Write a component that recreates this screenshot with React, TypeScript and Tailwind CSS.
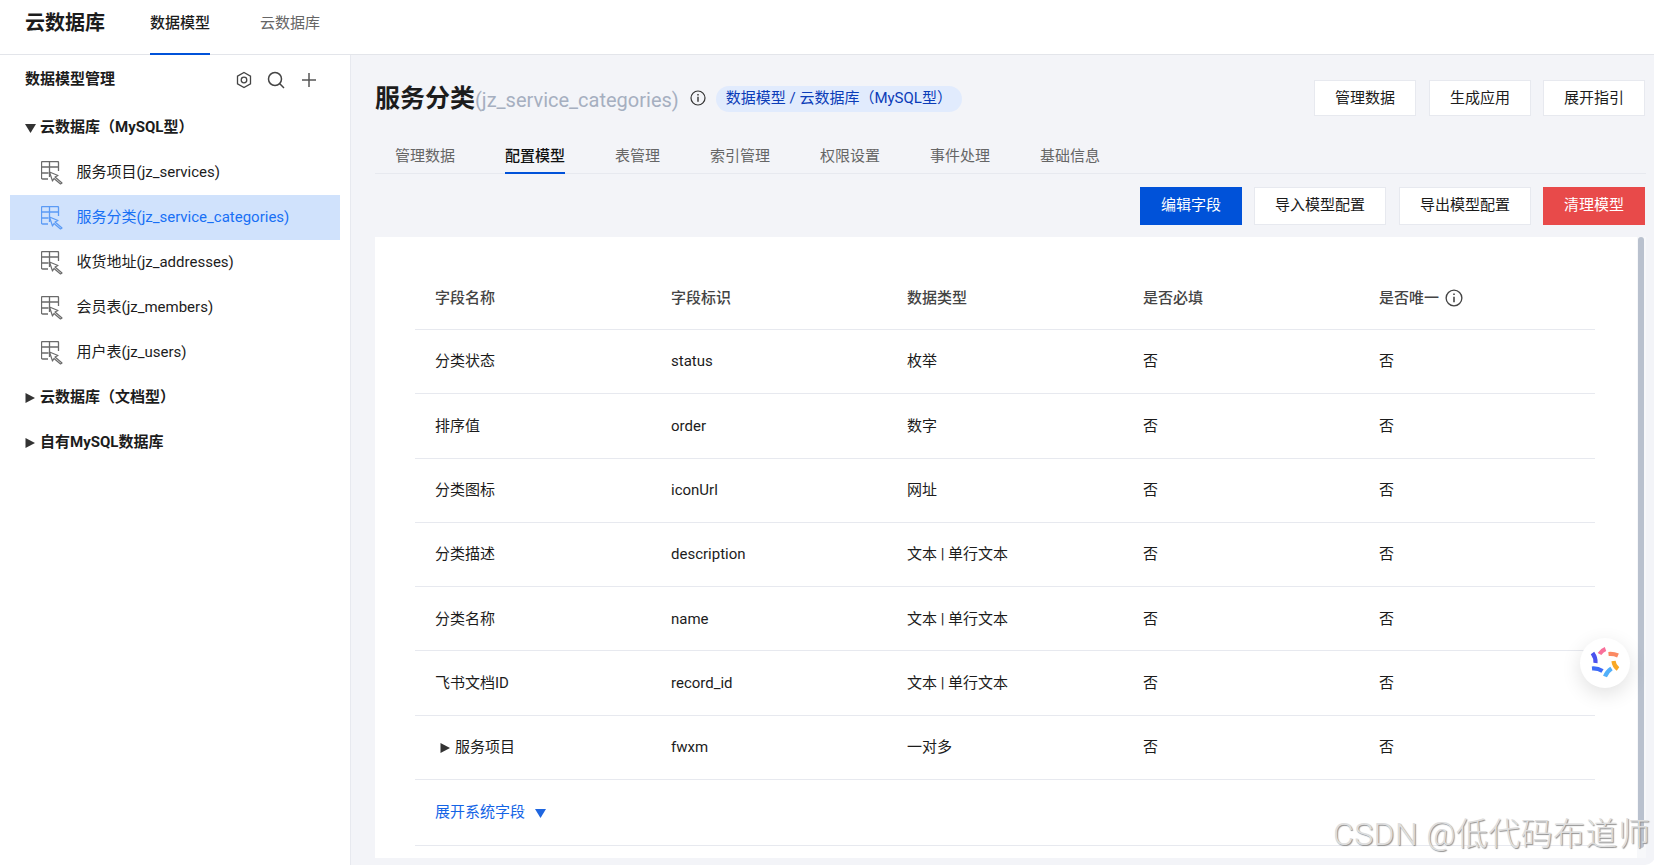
const font = "font-['Roboto','Noto_Sans_CJK_SC',sans-serif]";

const tableItems = [
  "服务项目(jz_services)",
  "服务分类(jz_service_categories)",
  "收货地址(jz_addresses)",
  "会员表(jz_members)",
  "用户表(jz_users)",
];

const tabs = ["管理数据", "配置模型", "表管理", "索引管理", "权限设置", "事件处理", "基础信息"];

const rows = [
  ["分类状态", "status", "枚举"],
  ["排序值", "order", "数字"],
  ["分类图标", "iconUrl", "网址"],
  ["分类描述", "description", "文本 | 单行文本"],
  ["分类名称", "name", "文本 | 单行文本"],
  ["飞书文档ID", "record_id", "文本 | 单行文本"],
  ["服务项目", "fwxm", "一对多"],
];

function TableIcon({ color }: { color: string }) {
  return (
    <svg width="24" height="24" viewBox="0 0 24 24" fill="none" stroke={color} className="shrink-0">
      <path d="M7 18H1.500a1 1 0 0 1-1-1V1.500a1 1 0 0 1 1-1h15a1 1 0 0 1 1 1V10" strokeWidth="1.300" />
      <path d="M.5 6h17M.5 12h7M8.500.5V16M8.500 6v5" strokeWidth="1.300" />
      <path d="M8.500 11l8.500 3.500-3 1.500 7 6-1.500 1-6.500-5.500-1.500 2.500z" strokeWidth="1.200" strokeLinejoin="round" />
    </svg>
  );
}

function InfoIcon({ size }: { size: number }) {
  return (
    <svg width={size} height={size} viewBox="0 0 16 16" fill="none" stroke="currentColor" strokeWidth="1.200">
      <circle cx="8" cy="8" r="7" />
      <path d="M8 6.800v5" strokeWidth="1.400" />
      <path d="M8 4v1.400" strokeWidth="1.400" />
    </svg>
  );
}

function Triangle({ down, className }: { down?: boolean; className: string }) {
  return (
    <svg width="11" height="10" viewBox="0 0 11 10" className={className} fill="currentColor">
      {down ? <path d="M0 1h11L5.500 10z" /> : <path d="M.5 0l9.500 5-9.500 5z" />}
    </svg>
  );
}

function Bot() {
  return (
    <svg width="30" height="30" viewBox="0 0 30 30" fill="none" strokeWidth="4.200" className="overflow-visible">
      <path d="M9.500 6Q11.500 2.500 15.500 1" stroke="#f8709b" />
      <path d="M18.500 6q5-.5 9.500 1.500" stroke="#fb8a63" />
      <path d="M23.500 13q.5 5 4.500 8" stroke="#f9a825" />
      <path d="M21.500 20.500q-4.500 3-6.500 8" stroke="#52b0fa" />
      <path d="M12.500 23q-5-3-10.500-2.500" stroke="#3d6bf7" />
      <path d="M5.500 15q.5-5-3-10" stroke="#4b52ee" />
    </svg>
  );
}

function ActionButton({ label, className }: { label: string; className: string }) {
  return (
    <button className={`${className} h-[38px] pb-[2px] bg-white border border-[#e7e9ef] text-[15px] text-[#1a1a1a]`}>
      {label}
    </button>
  );
}

export default function App() {
  return (
    <div className={`${font} relative w-[1654px] h-[865px] overflow-hidden bg-white text-[15px] text-[#1c1c1c]`}>
      {/* Header */}
      <div className="flex items-stretch h-[55px] bg-white border-b border-[#e3e5ea] pl-[25px]">
        <div className="text-[20px] font-bold leading-[46px] w-[125px]">云数据库</div>
        <div className="w-[60px] mr-[50px] border-b-2 border-[#0052d9] -mb-px leading-[46px] font-medium">数据模型</div>
        <div className="leading-[46px] text-[#666]">云数据库</div>
      </div>

      <div className="flex h-[810px]">
        {/* Sidebar */}
        <div className="w-[351px] shrink-0 bg-white border-r border-[#e7e9ef] px-[10px]">
          <div className="flex items-center h-[50px] pl-[15px]">
            <span className="font-bold w-[210px] -mt-[2px]">数据模型管理</span>
            <svg width="18" height="18" viewBox="0 0 18 18" fill="none" stroke="#444" strokeWidth="1.300">
              <path d="M9 1.500l6.500 3.750v7.500L9 16.500l-6.500-3.750v-7.500z" />
              <circle cx="9" cy="9" r="2.800" />
            </svg>
            <svg className="ml-[14px]" width="18" height="18" viewBox="0 0 18 18" fill="none" stroke="#444" strokeWidth="1.500">
              <circle cx="8" cy="8" r="6.500" />
              <path d="M12.800 12.800L17 17" />
            </svg>
            <svg className="ml-[15px]" width="18" height="18" viewBox="0 0 18 18" fill="none" stroke="#555" strokeWidth="1.500">
              <path d="M9 2v14M2 9h14" />
            </svg>
          </div>
          <div className="flex items-center h-[45px] pl-[15px] font-bold">
            <Triangle down className="text-[#333] mr-[4px]" />
            <span>云数据库（MySQL型）</span>
          </div>
          {tableItems.map((t, i) => (
            <div
              key={t}
              className={`flex items-center h-[45px] pl-[31px] ${i === 1 ? "bg-[#d0e2fc] text-[#1870f5]" : ""}`}
            >
              <TableIcon color={i === 1 ? "#5b9bf5" : "#6b6b6b"} />
              <span className="ml-[11.500px]">{t}</span>
            </div>
          ))}
          <div className="flex items-center h-[45px] pl-[15px] font-bold">
            <Triangle className="text-[#333] mr-[4px]" />
            <span>云数据库（文档型）</span>
          </div>
          <div className="flex items-center h-[45px] pl-[15px] font-bold">
            <Triangle className="text-[#333] mr-[4px]" />
            <span>自有MySQL数据库</span>
          </div>
        </div>

        {/* Content */}
        <div className="flex-1 pl-[24px] pr-[9px] bg-[#f3f4f8] rounded-br-[10px]">
          <div className="flex items-center h-[80px] pt-[8px]">
            <span className="text-[25px] font-bold">服务分类</span>
            <span className="text-[20px] text-[#a6afc0] mt-[1px]">(jz_service_categories)</span>
            <span className="ml-[11px] mr-[10px] text-[#333] -mt-[3px]"><InfoIcon size={16} /></span>
            <span className="h-[26px] leading-[24px] px-[10px] rounded-full bg-[#e1ebfd] text-[#0b3cb8] -mt-[1px]">
              数据模型 / 云数据库（MySQL型）
            </span>
            <div className="ml-auto flex mr-[1px] -mt-[2px]">
              <button className="w-[102px] h-[36px] bg-white border border-[#e7e9ef]">管理数据</button>
              <button className="w-[102px] h-[36px] ml-[13px] bg-white border border-[#e7e9ef]">生成应用</button>
              <button className="w-[102px] h-[36px] ml-[12px] bg-white border border-[#e7e9ef]">展开指引</button>
            </div>
          </div>

          {/* Tabs */}
          <div className="flex h-[39px] border-b border-[#e7e9ef] pl-[20px] gap-[50px]">
            {tabs.map((t, i) => (
              <div
                key={t}
                className={`-mb-px leading-[42px] h-[39px] ${
                  i === 1 ? "border-b-2 border-[#0052d9] font-medium text-[#111]" : "text-[#666]"
                }`}
              >
                {t}
              </div>
            ))}
          </div>

          {/* Actions */}
          <div className="flex justify-end mt-[13px] mb-[12px] mr-[1px]">
            <button className="w-[102px] h-[38px] pb-[2px] bg-[#0052d9] text-white">编辑字段</button>
            <ActionButton label="导入模型配置" className="w-[132px] ml-[12px]" />
            <ActionButton label="导出模型配置" className="w-[132px] ml-[13px]" />
            <button className="w-[102px] h-[38px] pb-[2px] ml-[12px] bg-[#e84a4a] text-white">清理模型</button>
          </div>

          {/* Table panel */}
          <div className="flex h-[621px]">
            <div className="w-[1262px] bg-white pl-[40px]">
              <div className="w-[1180px]">
                <div className="flex items-center h-[93px] border-b border-[#e7e9ef] font-medium text-[#444] pl-[20px] pt-[30px]">
                  <div className="w-[236px]">字段名称</div>
                  <div className="w-[236px]">字段标识</div>
                  <div className="w-[236px]">数据类型</div>
                  <div className="w-[236px]">是否必填</div>
                  <div className="flex items-center gap-[6px]">
                    是否唯一
                    <InfoIcon size={18} />
                  </div>
                </div>
                {rows.map((r, i) => (
                  <div key={r[1]} className="flex items-center h-[64.300px] border-b border-[#e7e9ef] pl-[20px]">
                    <div className="w-[236px] flex items-center">
                      {i === 6 && <Triangle className="text-[#333] ml-[5px] mr-[4px] mt-[2px]" />}
                      {r[0]}
                    </div>
                    <div className="w-[236px]">{r[1]}</div>
                    <div className="w-[236px]">{r[2]}</div>
                    <div className="w-[236px]">否</div>
                    <div>否</div>
                  </div>
                ))}
                <div className="flex items-center h-[65.700px] border-b border-[#e7e9ef] pl-[20px] text-[#1464e6]">
                  展开系统字段
                  <Triangle down className="text-[#1f66e0] ml-[10px] mt-[2px]" />
                </div>
              </div>
            </div>
            <div className="w-[9px] bg-[#f7f8fa] pl-[1px]">
              <div className="w-[6px] h-[611px] rounded-full bg-[#b9c1ce]" />
            </div>
          </div>
        </div>
      </div>

      {/* Floating assistant */}
      <div className="absolute left-[1580px] top-[638px] w-[50px] h-[50px] rounded-full bg-white shadow-[0_6px_20px_rgba(0,0,0,0.12)] flex items-center justify-center">
        <Bot />
      </div>

      {/* Watermark */}
      <div className="absolute left-[1333px] top-[813px] text-[32px] font-light tracking-[0.400px] leading-[42px] text-[#dedede] whitespace-nowrap [text-shadow:1px_1px_1px_#8f8f8f]">
        CSDN @低代码布道师
      </div>
    </div>
  );
}
